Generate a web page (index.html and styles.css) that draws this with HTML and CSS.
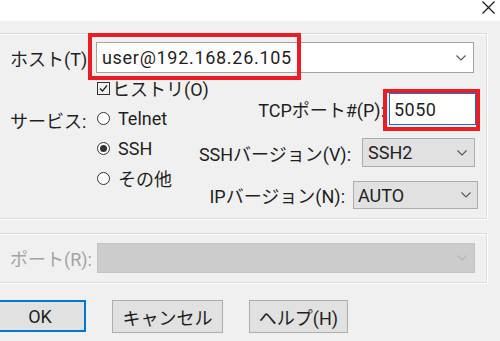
FILE: index.html
```html
<!DOCTYPE html>
<html lang="ja">
<head>
<meta charset="utf-8">
<title>Tera Term: 新しい接続</title>
<link rel="stylesheet" href="styles.css">
</head>
<body>
<div class="titlebar">
  <svg class="close" width="13" height="13" viewBox="0 0 13 13"><path d="M0.5 0.5 L12.5 12.5 M12.5 0.5 L0.5 12.5" stroke="#111" stroke-width="1.1" fill="none"/></svg>
</div>
<div class="main">
  <div class="group group-tcp">
    <div class="host-row">
      <span class="label">ホスト(T):</span>
      <div class="combo">
        <span class="value">user@192.168.26.105</span>
        <svg class="chev" width="10" height="6" viewBox="0 0 10 6"><path d="M0.5 0.5 L5 5 L9.5 0.5" stroke="#555" stroke-width="1.1" fill="none"/></svg>
      </div>
    </div>
    <div class="options">
      <div class="left">
        <span></span>
        <div class="opt"><span class="check"><svg width="11" height="11" viewBox="0 0 11 11"><path d="M2 5.5 L4.5 8 L9 2.5" stroke="#222" stroke-width="1.3" fill="none"/></svg></span><span>ヒストリ(O)</span></div>
        <span class="label svc">サービス:</span>
        <div class="opt"><span class="radio"></span><span>Telnet</span></div>
        <span></span>
        <div class="opt"><span class="radio on"></span><span>SSH</span></div>
        <span></span>
        <div class="opt"><span class="radio"></span><span>その他</span></div>
      </div>
      <div class="right">
        <div class="field field-tcp">
          <span>TCPポート#(P):</span>
          <div class="edit">5050</div>
        </div>
        <div class="field field-ssh">
          <span>SSHバージョン(V):</span>
          <div class="select select-ssh"><span>SSH2</span><svg class="chev" width="10" height="6" viewBox="0 0 10 6"><path d="M0.5 0.5 L5 5 L9.5 0.5" stroke="#555" stroke-width="1.1" fill="none"/></svg></div>
        </div>
        <div class="field field-ip">
          <span>IPバージョン(N):</span>
          <div class="select select-ip"><span>AUTO</span><svg class="chev" width="10" height="6" viewBox="0 0 10 6"><path d="M0.5 0.5 L5 5 L9.5 0.5" stroke="#555" stroke-width="1.1" fill="none"/></svg></div>
        </div>
      </div>
    </div>
  </div>
  <div class="group group-serial">
    <div class="host-row">
      <span class="label disabled">ポート(R):</span>
      <div class="combo combo-disabled">
        <span class="value"></span>
        <svg class="chev" width="10" height="6" viewBox="0 0 10 6"><path d="M0.5 0.5 L5 5 L9.5 0.5" stroke="#b4b4b4" stroke-width="1.1" fill="none"/></svg>
      </div>
    </div>
  </div>
  <div class="buttons">
    <div class="btn btn-ok">OK</div>
    <div class="btn btn-cancel">キャンセル</div>
    <div class="btn btn-help">ヘルプ(H)</div>
  </div>
</div>
<div class="mark mark-host"></div>
<div class="mark mark-port"></div>
</body>
</html>
```
FILE: styles.css
```css
html, body {
  margin: 0;
  padding: 0;
}
body {
  width: 500px;
  height: 341px;
  overflow: hidden;
  position: relative;
  background: #f0f0f0;
  font-family: Roboto, "Noto Sans CJK JP", sans-serif;
  font-size: 18px;
  color: #1f1f1f;
}
.titlebar {
  height: 21px;
  background: #fff;
  display: flex;
  justify-content: flex-end;
  align-items: flex-start;
  padding-right: 5px;
}
.close {
  margin-top: 1px;
}
.main {
  padding-top: 12px;
}
.group {
  box-sizing: border-box;
  width: 489px;
  margin-left: -2px;
  border: 1px solid #dcdcdc;
  box-shadow: inset 1px 1px 0 #fff, 1px 1px 0 #fff;
  padding-left: 11px;
}
.group-tcp {
  height: 186px;
  padding-top: 8px;
}
.host-row {
  display: flex;
  align-items: center;
  height: 31px;
}
.label {
  width: 86px;
  flex: none;
  white-space: nowrap;
}
.disabled {
  color: #a3a3a3;
}
.combo {
  box-sizing: border-box;
  flex: none;
  width: 378px;
  height: 31px;
  background: #fff;
  border: 1px solid #a2a2a2;
  display: flex;
  align-items: center;
  padding-left: 5px;
  padding-right: 7px;
}
.combo .value {
  flex: 1;
  letter-spacing: 0.7px;
}
.combo-disabled {
  height: 30px;
  margin-left: 1px;
  background: #cccccc;
  border-color: #c4c4c4;
}
.options {
  display: flex;
  height: 120px;
}
.left {
  flex: none;
  display: grid;
  grid-template-columns: 86px auto;
  grid-auto-rows: 30px;
  align-items: center;
}
.svc {
  margin-top: 3px;
}
.opt {
  display: flex;
  align-items: center;
  gap: 8px;
  white-space: nowrap;
}
.check {
  box-sizing: border-box;
  width: 13px;
  height: 13px;
  margin-left: 1px;
  border: 1px solid #333;
  display: flex;
  align-items: center;
  justify-content: center;
  margin-right: -6px;
}
.radio {
  box-sizing: border-box;
  width: 13px;
  height: 13px;
  margin-left: 1px;
  border: 1px solid #333;
  border-radius: 50%;
  display: flex;
  align-items: center;
  justify-content: center;
  background: #fff;
}
.radio.on::after {
  content: "";
  width: 7px;
  height: 7px;
  border-radius: 50%;
  background: #333;
}
.right {
  flex: 1;
  min-width: 0;
  padding-top: 20px;
  padding-right: 10px;
  display: flex;
  flex-direction: column;
  align-items: flex-end;
}
.field {
  display: flex;
  align-items: center;
  gap: 5px;
  white-space: nowrap;
}
.field > * {
  flex: none;
}
.field-tcp {
  gap: 4px;
}
.edit {
  box-sizing: border-box;
  width: 87px;
  height: 32px;
  background: #fff;
  border: 1px solid #0078d7;
  padding-left: 4px;
  letter-spacing: 0.5px;
  display: flex;
  align-items: center;
}
.field-ssh {
  margin-top: 13px;
  margin-right: 1px;
  gap: 11px;
}
.field-ip {
  margin-top: 14px;
  margin-right: -2px;
  gap: 8px;
}
.select {
  box-sizing: border-box;
  background: #e1e1e1;
  border: 1px solid #adadad;
  display: flex;
  align-items: center;
  justify-content: space-between;
  padding-left: 5px;
  padding-right: 7px;
}
.select-ssh {
  width: 113px;
  height: 29px;
}
.select-ip {
  width: 125px;
  height: 28px;
  padding-left: 4px;
  padding-right: 6px;
}
.group-serial {
  margin-top: 14px;
  height: 50px;
  padding-top: 9px;
}
.group-serial .host-row {
  height: 30px;
}
.buttons {
  display: flex;
  gap: 26px;
  margin-top: 17px;
  margin-left: -6px;
}
.btn {
  box-sizing: border-box;
  flex: none;
  height: 33px;
  background: #e1e1e1;
  border: 1px solid #adadad;
  display: flex;
  align-items: center;
  justify-content: center;
}
.btn-ok {
  width: 92px;
  height: 32px;
  border: 2px solid #0078d7;
}
.btn-cancel {
  width: 111px;
}
.btn-help {
  width: 99px;
}
.mark {
  position: absolute;
  box-sizing: border-box;
  border: 4px solid #ed1c24;
}
.mark-host {
  left: 88px;
  top: 33px;
  width: 213px;
  height: 47px;
}
.mark-port {
  left: 383px;
  top: 89px;
  width: 97px;
  height: 42px;
}
```
